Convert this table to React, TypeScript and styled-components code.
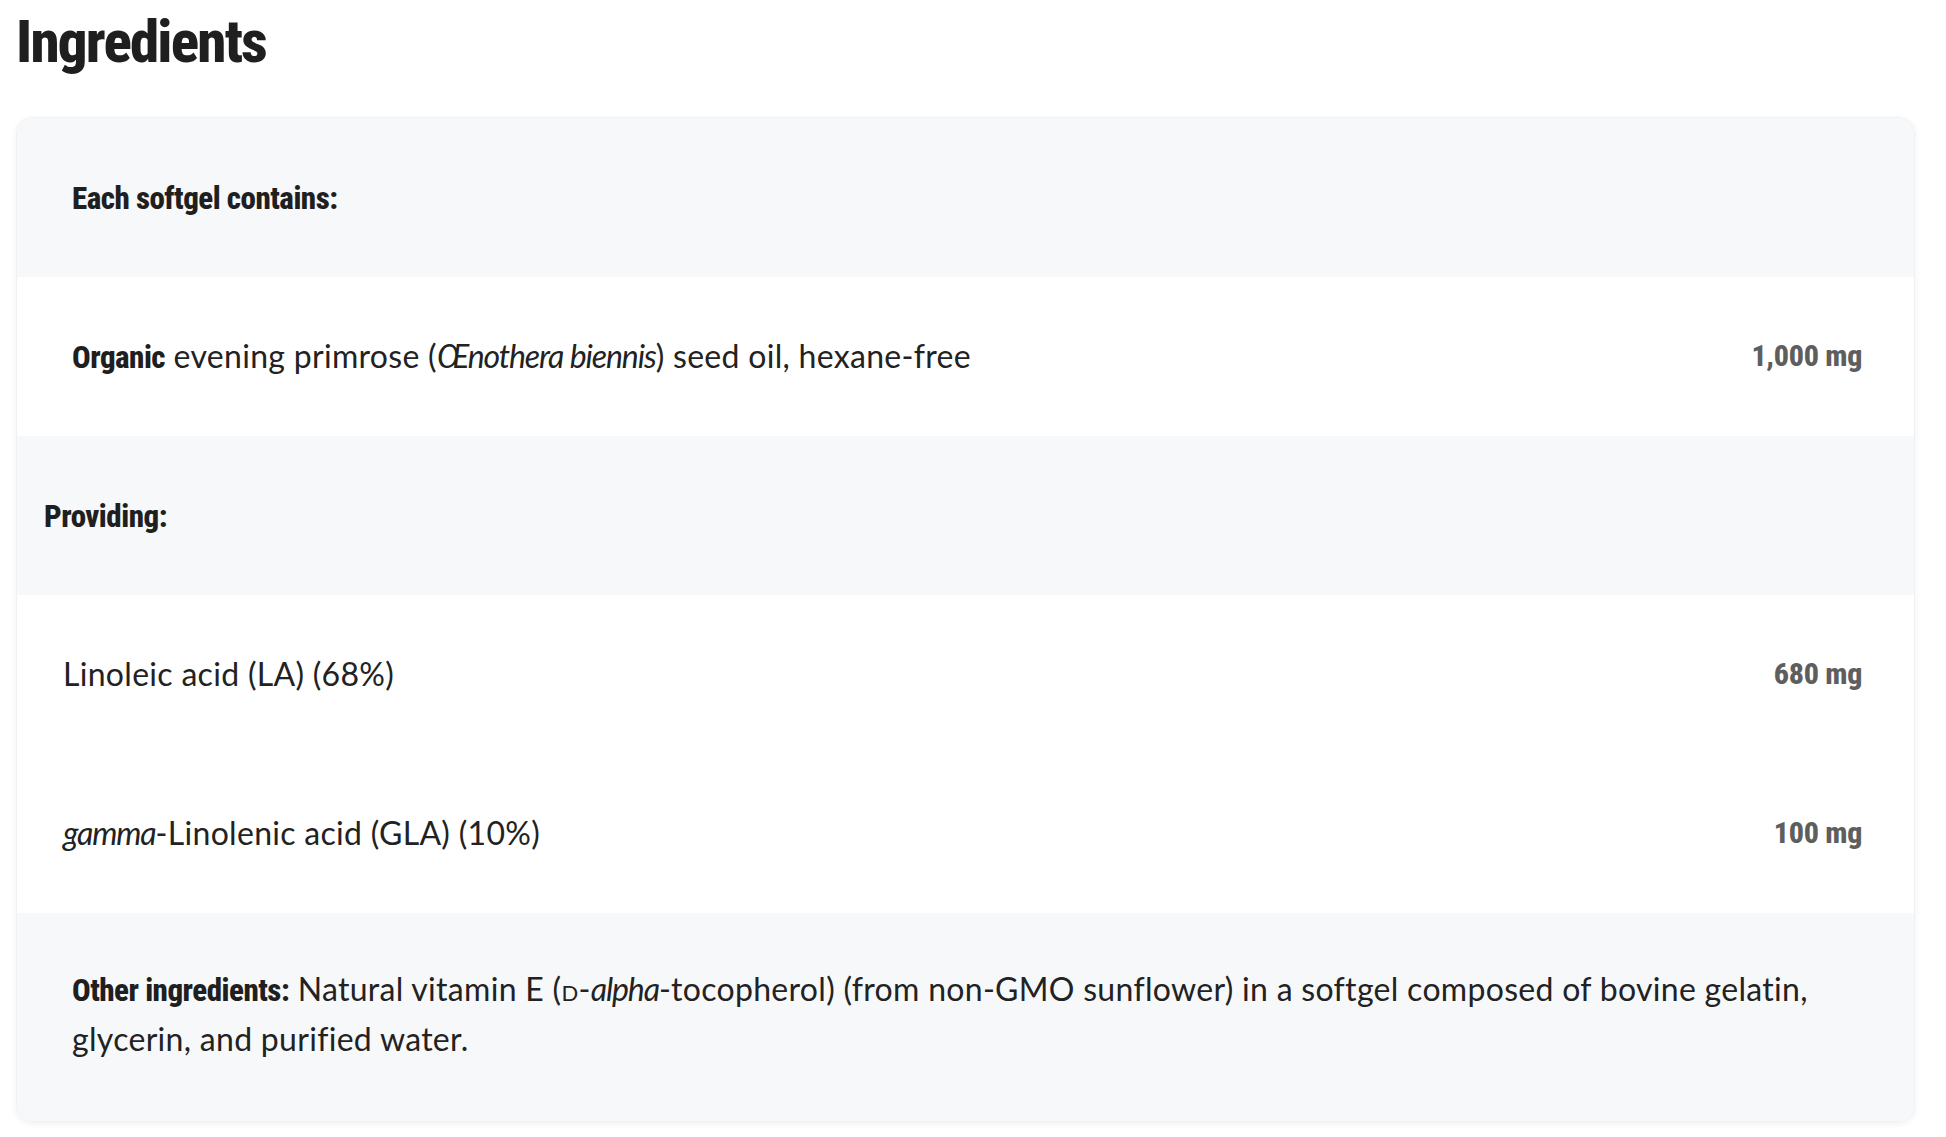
import React from "react";
import styled, { createGlobalStyle } from "styled-components";

const Global = createGlobalStyle`
  html, body { margin: 0; padding: 0; background: #ffffff; }
  body { font-family: Lato, "Open Sans", sans-serif; color: #222222; }
`;

const Page = styled.div`
  padding: 12px 31px 14px 16px;
`;

const Title = styled.h1`
  margin: 0 0 46px 0;
  font-family: Roboto, "Liberation Sans", sans-serif;
  font-stretch: condensed;
  font-weight: 800;
  font-size: 59px;
  line-height: 59px;
  letter-spacing: -1.8px;
  color: #1f1f1f;
`;

const Card = styled.div`
  border-radius: 16px;
  overflow: hidden;
  border: 1px solid #f0f1f3;
  box-shadow: 0 2px 6px rgba(0, 0, 0, 0.06);
`;

const Table = styled.table`
  width: 100%;
  border-collapse: collapse;
`;

const Row = styled.tr<{ $shade?: boolean }>`
  background: ${(p) => (p.$shade ? "#f7f8fa" : "#ffffff")};
`;

const Cell = styled.td<{ $indent: number }>`
  padding: 54px 20px 55px ${(p) => p.$indent}px;
  font-size: 32px;
  line-height: 50px;
  letter-spacing: 0.3px;
  color: #222222;
  vertical-align: middle;
`;

const NoteCell = styled(Cell)`
  padding-top: 51px;
  padding-bottom: 57px;
`;

const Amount = styled.td`
  padding: 54px 52px 55px 20px;
  text-align: right;
  white-space: nowrap;
  font-family: Roboto, "Liberation Sans", sans-serif;
  font-stretch: condensed;
  font-weight: 800;
  font-size: 30px;
  line-height: 50px;
  letter-spacing: -0.3px;
  color: #5e5e5e;
`;

const Strong = styled.b`
  font-family: Roboto, "Liberation Sans", sans-serif;
  font-stretch: condensed;
  font-weight: 800;
  font-size: 31px;
  line-height: 1;
  letter-spacing: -0.5px;
  color: #1f1f1f;
`;

const Em = styled.i`
  letter-spacing: -1.1px;
`;

const Small = styled.span`
  font-variant: small-caps;
  text-transform: lowercase;
  line-height: 1;
`;

export default function App() {
  return (
    <>
      <Global />
      <Page>
        <Title>Ingredients</Title>
        <Card>
          <Table>
            <tbody>
              <Row $shade>
                <Cell $indent={55} colSpan={2}>
                  <Strong>Each softgel contains:</Strong>
                </Cell>
              </Row>
              <Row>
                <Cell $indent={55}>
                  <Strong>Organic</Strong> evening primrose (<Em>Œnothera biennis</Em>) seed oil, hexane-free
                </Cell>
                <Amount>1,000 mg</Amount>
              </Row>
              <Row $shade>
                <Cell $indent={27} colSpan={2}>
                  <Strong>Providing:</Strong>
                </Cell>
              </Row>
              <Row>
                <Cell $indent={46}>Linoleic acid (LA) (68%)</Cell>
                <Amount>680 mg</Amount>
              </Row>
              <Row>
                <Cell $indent={46}>
                  <Em>gamma</Em>-Linolenic acid (GLA) (10%)
                </Cell>
                <Amount>100 mg</Amount>
              </Row>
              <Row $shade>
                <NoteCell $indent={55} colSpan={2}>
                  <Strong>Other ingredients:</Strong> Natural vitamin E (<Small>D</Small>-<Em>alpha</Em>-tocopherol) (from non-GMO sunflower) in a softgel composed of bovine gelatin, glycerin, and purified water.
                </NoteCell>
              </Row>
            </tbody>
          </Table>
        </Card>
      </Page>
    </>
  );
}
